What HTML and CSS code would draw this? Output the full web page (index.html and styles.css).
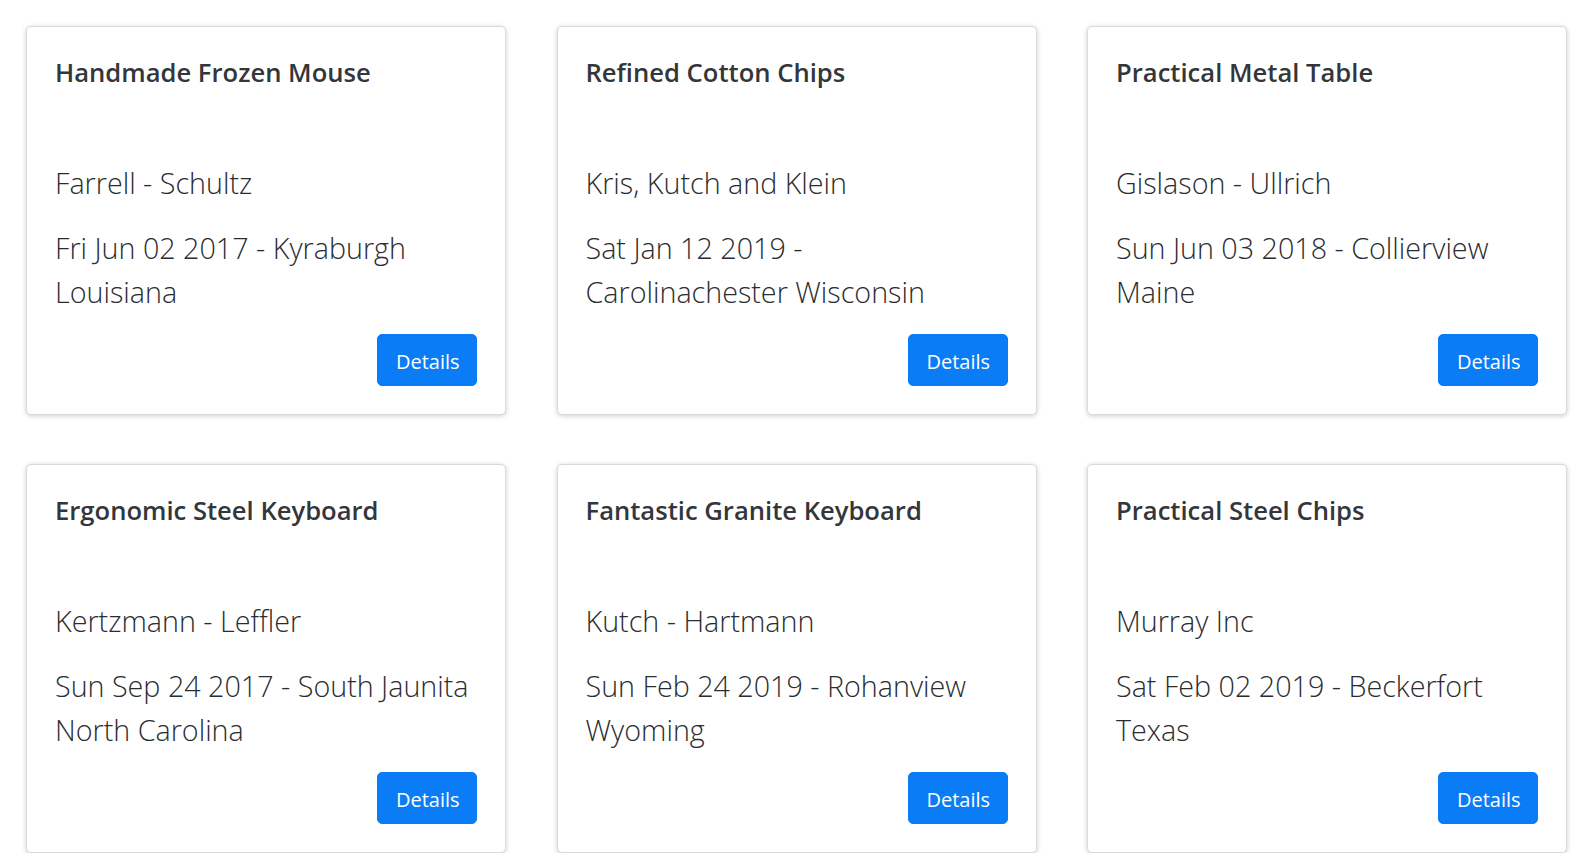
FILE: index.html
```html
<!DOCTYPE html>
<html lang="en">
<head>
<meta charset="utf-8">
<title>Events</title>
<link rel="stylesheet" href="styles.css">
</head>
<body>
<main class="grid">
  <div class="card">
    <h5 class="card-title">Handmade Frozen Mouse</h5>
    <p class="lead company">Farrell - Schultz</p>
    <p class="lead info">Fri Jun 02 2017 - Kyraburgh Louisiana</p>
    <div class="actions"><button class="btn">Details</button></div>
  </div>
  <div class="card">
    <h5 class="card-title">Refined Cotton Chips</h5>
    <p class="lead company">Kris, Kutch and Klein</p>
    <p class="lead info">Sat Jan 12 2019 - Carolinachester Wisconsin</p>
    <div class="actions"><button class="btn">Details</button></div>
  </div>
  <div class="card">
    <h5 class="card-title">Practical Metal Table</h5>
    <p class="lead company">Gislason - Ullrich</p>
    <p class="lead info">Sun Jun 03 2018 - Collierview Maine</p>
    <div class="actions"><button class="btn">Details</button></div>
  </div>
  <div class="card">
    <h5 class="card-title">Ergonomic Steel Keyboard</h5>
    <p class="lead company">Kertzmann - Leffler</p>
    <p class="lead info">Sun Sep 24 2017 - South Jaunita North Carolina</p>
    <div class="actions"><button class="btn">Details</button></div>
  </div>
  <div class="card">
    <h5 class="card-title">Fantastic Granite Keyboard</h5>
    <p class="lead company">Kutch - Hartmann</p>
    <p class="lead info">Sun Feb 24 2019 - Rohanview Wyoming</p>
    <div class="actions"><button class="btn">Details</button></div>
  </div>
  <div class="card">
    <h5 class="card-title">Practical Steel Chips</h5>
    <p class="lead company">Murray Inc</p>
    <p class="lead info">Sat Feb 02 2019 - Beckerfort Texas</p>
    <div class="actions"><button class="btn">Details</button></div>
  </div>
</main>
</body>
</html>
```
FILE: styles.css
```css
* { box-sizing: border-box; }

html, body {
  margin: 0;
  background: #ffffff;
}

body {
  font-family: "Open Sans", "Noto Sans", sans-serif;
  color: #212529;
}

.grid {
  display: grid;
  grid-template-columns: repeat(3, 480px);
  column-gap: 50.5px;
  row-gap: 49px;
  padding: 26px 0 0 26px;
}

.card {
  display: flex;
  flex-direction: column;
  background: #fff;
  border: 1px solid #dadada;
  border-radius: 5px;
  box-shadow: 0 1px 5px rgba(0, 0, 0, 0.2);
  padding: 28px;
}

.card-title {
  margin: 0 0 71px;
  font-size: 25.6px;
  line-height: 35px;
  font-weight: 600;
  color: #33363a;
}

.lead {
  margin: 0;
  font-size: 28.7px;
  line-height: 44px;
  font-weight: 300;
  color: #2a2d30;
}

.company {
  margin-bottom: 21px;
}

.actions {
  display: flex;
  justify-content: flex-end;
  margin-top: 20px;
}

.btn {
  font-family: "Open Sans", "Noto Sans", sans-serif;
  font-size: 20px;
  font-weight: 400;
  line-height: 33.6px;
  padding: 10px 18px 6.4px;
  width: 100px;
  height: 52px;
  color: #fff;
  background: #0a7cf5;
  border: 1px solid #0a7cf5;
  border-radius: 5px;
  cursor: pointer;
}
```
